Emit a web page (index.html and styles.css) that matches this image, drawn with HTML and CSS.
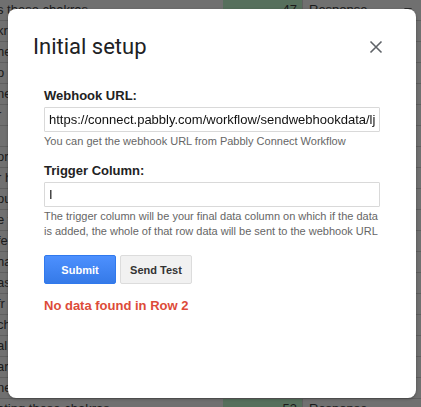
FILE: index.html
```html
<!DOCTYPE html>
<html>
<head>
<meta charset="utf-8">
<link rel="stylesheet" href="styles.css">
</head>
<body>
<div class="sheet">
  <div class="row"><div class="ca">s these chakras</div><div class="cb">47</div><div class="cc">Response<span class="dd"></span></div></div>
  <div class="row"><div class="ca">kr</div><div class="cb"></div><div class="cc"></div></div>
  <div class="row"><div class="ca">he</div><div class="cb"></div><div class="cc"></div></div>
  <div class="row"><div class="ca">o</div><div class="cb"></div><div class="cc"></div></div>
  <div class="row"><div class="ca">ne</div><div class="cb"></div><div class="cc"></div></div>
  <div class="row"><div class="ca">r</div><div class="cb"></div><div class="cc"></div></div>
  <div class="row"><div class="ca"></div><div class="cb"></div><div class="cc"></div></div>
  <div class="row"><div class="ca">or</div><div class="cb"></div><div class="cc"></div></div>
  <div class="row"><div class="ca">r h</div><div class="cb"></div><div class="cc"></div></div>
  <div class="row"><div class="ca">ou</div><div class="cb"></div><div class="cc"></div></div>
  <div class="row"><div class="ca">e f</div><div class="cb"></div><div class="cc"></div></div>
  <div class="row"><div class="ca">fe</div><div class="cb"></div><div class="cc"></div></div>
  <div class="row"><div class="ca">ha</div><div class="cb"></div><div class="cc"></div></div>
  <div class="row"><div class="ca">as</div><div class="cb"></div><div class="cc"></div></div>
  <div class="row"><div class="ca">fr</div><div class="cb"></div><div class="cc"></div></div>
  <div class="row"><div class="ca">ch</div><div class="cb"></div><div class="cc"></div></div>
  <div class="row"><div class="ca">al</div><div class="cb"></div><div class="cc"></div></div>
  <div class="row"><div class="ca">ar</div><div class="cb"></div><div class="cc"></div></div>
  <div class="row"><div class="ca">ne</div><div class="cb"></div><div class="cc"></div></div>
  <div class="row"><div class="ca">ating these chakras</div><div class="cb">53</div><div class="cc">Response<span class="dd"></span></div></div>
</div>

<div class="dialog">
  <div class="dlg-head">
    <h1 class="dlg-title">Initial setup</h1>
    <button class="close" aria-label="Close">
      <svg width="14" height="14" viewBox="0 0 14 14"><path d="M1.5 1.5 L12.5 12.5 M12.5 1.5 L1.5 12.5" stroke="#5f6368" stroke-width="1.6" fill="none"/></svg>
    </button>
  </div>
  <div class="dlg-body">
    <div class="field">
      <div class="lbl">Webhook URL:</div>
      <div class="txt"><span class="val">https://connect.pabbly.com/workflow/sendwebhookdata/ljIyNjA1</span></div>
      <p class="hint">You can get the webhook URL from Pabbly Connect Workflow</p>
    </div>
    <div class="field">
      <div class="lbl">Trigger Column:</div>
      <div class="txt"><span class="val">I</span></div>
      <p class="hint">The trigger column will be your final data column on which if the data is added, the whole of that row data will be sent to the webhook URL</p>
    </div>
    <div class="btns">
      <button class="btn primary">Submit</button>
      <button class="btn secondary">Send Test</button>
    </div>
    <p class="error">No data found in Row 2</p>
  </div>
</div>
</body>
</html>
```

FILE: styles.css
```css
html, body {
  margin: 0;
  padding: 0;
}
body {
  width: 421px;
  height: 407px;
  overflow: hidden;
  position: relative;
  background: #707070;
  font-family: "Liberation Sans", Arial, sans-serif;
}

/* dimmed spreadsheet behind */
.sheet {
  display: flex;
  flex-direction: column;
}
.row {
  display: flex;
  height: 20px;
  border-bottom: 1px solid #5f5f5f;
  font-size: 13px;
  line-height: 19px;
  color: #1b1b1b;
}
.ca {
  width: 226px;
  white-space: nowrap;
  overflow: hidden;
  margin-left: -3px;
}
.cb {
  width: 74px;
  padding-right: 5px;
  text-align: right;
  background: #566f5c;
  border-right: 1px solid #5f5f5f;
}
.cc {
  flex: 1;
  padding-left: 6px;
  position: relative;
  white-space: nowrap;
}
.dd {
  position: absolute;
  right: 9px;
  top: 8px;
  width: 0;
  height: 0;
  border-left: 4px solid transparent;
  border-right: 4px solid transparent;
  border-top: 5px solid #2a2a2a;
}

/* dialog */
.dialog {
  position: absolute;
  left: 8px;
  top: 9px;
  width: 408px;
  height: 389px;
  background: #fff;
  border-radius: 8px;
  box-shadow: 0 1px 3px rgba(0,0,0,0.3);
  box-sizing: border-box;
}
.dlg-head {
  display: flex;
  align-items: center;
  justify-content: space-between;
  padding: 24px 33px 0 25px;
}
.dlg-title {
  margin: 0;
  font-family: Roboto, "Liberation Sans", sans-serif;
  font-weight: 400;
  font-size: 22px;
  line-height: 28px;
  color: #202124;
}
.close {
  border: 0;
  background: transparent;
  padding: 0;
  width: 14px;
  height: 14px;
  display: flex;
}
.dlg-body {
  padding: 27px 28px 0 36px;
  font-size: 13px;
  color: #222;
}
.field {
  display: flex;
  flex-direction: column;
  margin-bottom: 14px;
}
.lbl {
  font-weight: bold;
  font-size: 13px;
  line-height: 16px;
  color: #222;
  margin-bottom: 3px;
}
.txt {
  box-sizing: border-box;
  width: 336px;
  height: 25px;
  border: 1px solid #d9d9d9;
  border-radius: 1px;
  padding: 0 3px 0 4px;
  font-size: 13px;
  line-height: 23px;
  color: #111;
}
.val {
  display: block;
  white-space: nowrap;
  overflow: hidden;
  will-change: transform;
}
.hint {
  margin: 2px 0 0;
  font-size: 11px;
  line-height: 15px;
  color: #666;
}
.btns {
  display: flex;
  gap: 4px;
  margin-top: 16px;
}
.btn {
  height: 29px;
  width: 72px;
  border-radius: 2px;
  font-family: "Liberation Sans", Arial, sans-serif;
  font-weight: bold;
  font-size: 11px;
  padding: 0;
}
.primary {
  background: linear-gradient(#4d90fe, #357ae8);
  border: 1px solid #3079ed;
  color: #fff;
}
.secondary {
  background: #f1f1f1;
  border: 1px solid #dcdcdc;
  color: #333;
}
.error {
  margin: 14px 0 0;
  font-weight: bold;
  font-size: 13px;
  line-height: 16px;
  color: #dd4b39;
}
```
